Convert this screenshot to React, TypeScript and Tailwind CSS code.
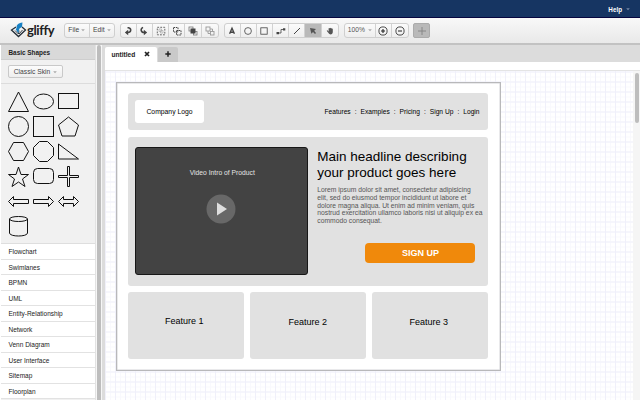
import React from "react";

const font = "font-['Liberation_Sans',Arial,sans-serif]";

const categories = [
  "Flowchart",
  "Swimlanes",
  "BPMN",
  "UML",
  "Entity-Relationship",
  "Network",
  "Venn Diagram",
  "User Interface",
  "Sitemap",
  "Floorplan",
];

const shapes: React.ReactNode[] = [
  <path d="M10.5 1L20.5 20.5H.5Z" />,
  <ellipse cx="10.5" cy="10.5" rx="10" ry="7.5" />,
  <rect x=".5" y="2.5" width="20" height="15" />,
  <circle cx="10.5" cy="10.5" r="10" />,
  <rect x=".5" y=".5" width="20" height="20" />,
  <path d="M10.5 1L20.5 9L17 20H4L.5 9Z" />,
  <path d="M5.5 1.5H15.5L20.5 10.5L15.5 19.5H5.5L.5 10.5Z" />,
  <path d="M6.5 .5H14.5L20.5 6.5V14.5L14.5 20.5H6.5L.5 14.5V6.5Z" />,
  <path d="M.5 3V18H20.5Z" />,
  <path d="M10.5 1L13 8.5H20.5L14.5 13L17 20.5L10.5 16L4 20.5L6.5 13L.5 8.5H8Z" />,
  <rect x=".5" y="2.5" width="20" height="15" rx="4" />,
  <path d="M9.5 .5H11.5V9.5H20.5V11.5H11.5V20.5H9.5V11.5H.5V9.5H9.5Z" />,
  <path d="M.5 10.5L5.5 5.5V8.5H20.5V12.5H5.5V15.5Z" />,
  <path d="M20.5 10.5L15.5 5.5V8.5H.5V12.5H15.5V15.5Z" />,
  <path d="M.5 10.5L5.5 5.5V8.5H15.5V5.5L20.5 10.5L15.5 15.5V12.5H5.5V15.5Z" />,
  <g>
    <path d="M1.5 3V17C1.5 21 19.5 21 19.5 17V3" />
    <ellipse cx="10.5" cy="3" rx="9" ry="2.5" />
  </g>,
];

function Caret({ light = false }: { light?: boolean }) {
  return (
    <svg width="4" height="3" viewBox="0 0 4 3" className="shrink-0">
      <path d="M.2 .3H3.8L2 2.3Z" fill={light ? "#7486a5" : "#aaa"} />
    </svg>
  );
}

function Icon({ children }: { children: React.ReactNode }) {
  return (
    <svg width="12" height="12" viewBox="0 0 12 12" fill="none" stroke="#444" className="shrink-0">
      {children}
    </svg>
  );
}

function Group({ children }: { children: React.ReactNode }) {
  return (
    <div className="flex h-[14.5px] shrink-0 divide-x divide-[#d2d2d2] overflow-hidden rounded-[3px] border border-[#cfcfcf] bg-gradient-to-b from-[#fbfbfb] to-[#eeeeee]">
      {children}
    </div>
  );
}

function Tool({ children, active = false }: { children: React.ReactNode; active?: boolean }) {
  return (
    <div className={`flex h-full w-[16.2px] shrink-0 items-center justify-center ${active ? "bg-[#b9b9b9]" : ""}`}>
      <Icon>{children}</Icon>
    </div>
  );
}

function Toolbar() {
  return (
    <div className="flex h-[27px] shrink-0 items-center border-b-2 border-[#c2c2c2] bg-gradient-to-b from-[#f8f8f8] to-[#e9e9e9] pl-[10px] text-[6.7px]">
      <div className="flex h-[25px] w-[54px] shrink-0 items-center">
        <svg width="17" height="17" viewBox="0 0 17 17" fill="none" className="shrink-0">
          <path d="M6 5L1.5 8L8.5 14.5L15.5 8L12 5" stroke="#222c36" strokeWidth="1.3" />
          <path d="M5 8.5L8.5 12L9 8.5M9 12L12.5 8" stroke="#222c36" strokeWidth=".9" />
          <path d="M12.5 .5C8 1 6 3.5 6.8 5.5L5.8 7.5L8.3 11.3L9.3 6.7L12 4.8Z" fill="#1881c4" />
        </svg>
        <span className="-mt-[1px] font-['Lato',sans-serif] text-[13px] leading-[16px] font-bold tracking-[-0.4px] text-[#202020]">gliffy</span>
      </div>
      <Group>
        <div className="flex w-[24.5px] items-center justify-center gap-[2px]">File<Caret /></div>
        <div className="flex w-[24.5px] items-center justify-center gap-[2px]">Edit<Caret /></div>
      </Group>
      <div className="w-[4.7px] shrink-0" />
      <Group>
        <Tool><path d="M5.5 2.8H6.5C9.8 3.5 9.3 7.5 5.8 7.5" strokeWidth="1.5" /><path d="M2.8 7.5L6.2 4.8V10.2Z" fill="#444" stroke="none" /></Tool>
        <Tool><path d="M5 2.3C2 4 2.8 7.5 6.2 7.5" strokeWidth="1.5" /><path d="M9.2 7.5L5.8 4.8V10.2Z" fill="#444" stroke="none" /></Tool>
        <Tool>
          <rect x="2.3" y="2.3" width="7.5" height="7.5" strokeDasharray="1.8 1.2" strokeWidth=".8" />
          <path d="M4 4H6.5V6.5H4ZM5.5 5.5H8V8H5.5Z" stroke="#aaa" strokeWidth=".7" />
        </Tool>
        <Tool>
          <rect x="2.5" y="2.5" width="4.5" height="4.5" strokeDasharray="1.5 .8" />
          <rect x="5.5" y="5.5" width="4.5" height="4.5" strokeDasharray="1.5 .8" />
        </Tool>
        <Tool>
          <rect x="2" y="2" width="4" height="4" stroke="#777" strokeWidth=".8" />
          <rect x="6.5" y="6.5" width="3.5" height="3.5" stroke="#777" strokeWidth=".8" />
          <rect x="3.5" y="3.5" width="5" height="5" fill="#444" stroke="none" />
        </Tool>
        <Tool>
          <g stroke="#999" strokeWidth=".9"><rect x="2" y="2" width="4" height="4" /><rect x="6.5" y="6.5" width="3.5" height="3.5" /><path d="M4 6V8.5H6M6 4H8.5V6" /></g>
        </Tool>
      </Group>
      <div className="w-[4.7px] shrink-0" />
      <Group>
        <Tool><path d="M3.6 8.8L6 3.3L8.4 8.8M4.4 7.2H7.6" strokeWidth="1.4" /></Tool>
        <Tool><circle cx="6" cy="6" r="3.4" strokeWidth=".8" /></Tool>
        <Tool><rect x="2.8" y="2.8" width="6.4" height="6.4" strokeWidth=".8" /></Tool>
        <Tool><path d="M3 8H6V4.5H9" strokeWidth=".8" /><path d="M1.5 7H4V9.3H1.5ZM8 3.3H10.3V5.5H8Z" fill="#444" stroke="none" /></Tool>
        <Tool><path d="M3 9L9 3" strokeWidth="1" /></Tool>
        <Tool active><path d="M3 3L9 4L7.2 5.7L9 8L8 9L6 7L4.4 8.7Z" fill="#555" stroke="none" /></Tool>
        <Tool><path d="M3.4 5.2L4.6 6.5V3.5C4.6 2.8 5.4 2.8 5.5 3.5C5.5 2.5 6.5 2.5 6.6 3.3C7 2.7 7.7 3 7.7 3.7C8.3 3.3 8.8 3.7 8.8 4.3V7C8.8 10 5.3 10 4.5 8L2.8 6C2.7 5.4 3 5 3.4 5.2Z" fill="#555" stroke="none" /></Tool>
      </Group>
      <div className="w-[5px] shrink-0" />
      <Group>
        <div className="flex w-[31px] items-center justify-center gap-[3px] text-[#555]">100%<Caret /></div>
        <Tool><circle cx="6" cy="6" r="4.1" stroke="#222" strokeWidth=".8" /><path d="M4 6H8M6 4V8" stroke="#222" strokeWidth="1.1" /></Tool>
        <Tool><circle cx="6" cy="6" r="4.1" stroke="#222" strokeWidth=".8" /><path d="M4 6H8" stroke="#222" strokeWidth="1.1" /></Tool>
      </Group>
      <div className="w-[4.3px] shrink-0" />
      <div className="flex h-[14.5px] w-[17px] items-center justify-center rounded-[2px] border border-[#ababab] bg-[#b9b9b9]">
        <Icon><path d="M2 6H10M6 2V10" stroke="#858585" strokeWidth=".9" /></Icon>
      </div>
    </div>
  );
}

function Sidebar() {
  return (
    <aside className="flex w-[105px] shrink-0 bg-[#dcdcdc]">
      <div className="flex w-[96px] shrink-0 flex-col overflow-hidden border-r border-l border-r-[#e2e2e2] border-l-white bg-[#f1f1f1]">
        <div className="flex h-[15px] shrink-0 items-center border-b border-[#cecece] bg-[#d9d9d9] pt-[1px] pl-[7.5px] text-[6.4px] font-bold text-[#222]">
          Basic Shapes
        </div>
        <div className="flex h-[24px] shrink-0 items-center border-b border-[#dcdcdc] pl-[7px]">
          <div className="flex h-[12.5px] w-[55px] items-center justify-center gap-[3px] rounded-[2px] border border-[#c9c9c9] bg-gradient-to-b from-[#fcfcfc] to-[#eeeeee] pt-[1px] text-[6.7px] text-[#444]">
            Classic Skin<Caret />
          </div>
        </div>
        <div className="grid h-[159px] shrink-0 grid-cols-[21px_21px_21px] content-start gap-x-[4px] gap-y-[4px] pt-[6.5px] pl-[7px]">
          {shapes.map((shape, i) => (
            <svg key={i} width="21" height="21" viewBox="0 0 21 21" fill="none" stroke="#111">
              {shape}
            </svg>
          ))}
        </div>
        <ul className="shrink-0 border-t border-[#dedede] bg-white">
          {categories.map((c) => (
            <li key={c} className="flex h-[15.5px] items-center border-b border-[#e2e2e2] pt-[1.5px] pl-[7.5px] text-[6.5px] whitespace-nowrap text-[#222]">
              {c}
            </li>
          ))}
        </ul>
      </div>
      <div className="flex w-[6px] shrink-0 bg-[#f6f6f6] pr-[1px] pl-[1px]">
        <div className="w-[4px] rounded-t-[2px] bg-[#bdbdbd]" />
      </div>
    </aside>
  );
}

function Mockup() {
  return (
    <div className="flex h-[289px] w-[385px] flex-col gap-[6.5px] border border-[#b8b8ba] bg-white pt-[10.5px] pl-[11.5px] shadow-[inset_0_0_0_0.5px_#d4d4d8]">
      <header className="flex h-[37px] w-[359.5px] shrink-0 items-center justify-between rounded-[3px] bg-[#e1e1e1] pr-[8px] pl-[6.5px]">
        <div className="flex h-[23.5px] w-[69px] items-center justify-center rounded-[3px] bg-white pt-[1.5px] pl-[1px] text-[6.8px] text-black">Company Logo</div>
        <nav className="flex gap-[4px] pt-[1px] text-[6.65px] text-black">
          <span>Features</span><span>:</span><span>Examples</span><span>:</span><span>Pricing</span><span>:</span><span>Sign Up</span><span>:</span><span>Login</span>
        </nav>
      </header>
      <section className="flex h-[149px] w-[359.5px] shrink-0 rounded-[3px] bg-[#e1e1e1] pt-[10px] pl-[6.8px]">
        <div className="flex h-[128.5px] w-[173px] shrink-0 flex-col items-center rounded-[3px] border border-[#171717] bg-[#434343] pt-[20.5px]">
          <span className="pl-[2px] text-[6.75px] leading-[10px] text-[#e4e4e4]">Video Intro of Product</span>
          <svg width="30" height="30" viewBox="0 0 30 30" className="mt-[15.5px]">
            <circle cx="15" cy="15" r="14.5" fill="#686868" />
            <path d="M11 8.5L21 15L11 21.5Z" fill="#dedede" />
          </svg>
        </div>
        <div className="flex w-[172px] flex-col pl-[9.5px]">
          <h1 className="mt-[2.5px] text-[13.5px] leading-[15.6px] whitespace-nowrap text-black">Main headline describing<br />your product goes here</h1>
          <p className="mt-[6px] text-[6.75px] leading-[7.7px] whitespace-nowrap text-[#555]">
            Lorem ipsum dolor sit amet, consectetur adipisicing<br />
            elit, sed do eiusmod tempor incididunt ut labore et<br />
            dolore magna aliqua. Ut enim ad minim veniam, quis<br />
            nostrud exercitation ullamco laboris nisi ut aliquip ex ea<br />
            commodo consequat.
          </p>
          <button className="mt-[18.5px] ml-[48px] flex h-[19.5px] w-[109.5px] shrink-0 items-center justify-center rounded-[4px] bg-[#f0890b] pt-[1.5px] pl-[1px] text-[9px] font-bold text-white">SIGN UP</button>
        </div>
      </section>
      <div className="flex gap-[6.5px] text-[9px] leading-[10px] text-black">
        <div className="h-[67px] w-[115.5px] rounded-[3px] bg-[#e1e1e1] pt-[24px] pr-[3px] text-center">Feature 1</div>
        <div className="h-[67px] w-[115.5px] rounded-[3px] bg-[#e1e1e1] pt-[25px] text-center">Feature 2</div>
        <div className="h-[67px] w-[115.5px] rounded-[3px] bg-[#e1e1e1] pt-[25px] pr-[2px] text-center">Feature 3</div>
      </div>
    </div>
  );
}

export default function App() {
  return (
    <div className={`flex h-[400px] w-[640px] flex-col overflow-hidden bg-white text-[7px] text-[#444] ${font}`}>
      <div className="flex h-[18px] shrink-0 items-center justify-end gap-[4px] border-b border-[#06063f] bg-[#163562] pt-[2px] pr-[10px] text-[6.3px] font-bold text-white">
        Help<Caret light />
      </div>
      <Toolbar />
      <div className="flex min-h-0 flex-1">
        <Sidebar />
        <main className="flex min-w-0 flex-1 flex-col">
          <div className="flex h-[17px] shrink-0 items-end bg-[#dcdcdc]">
            <div className="flex h-[15.5px] w-[52px] items-center justify-between rounded-t-[2px] bg-white pr-[7.5px] pl-[6.5px] text-[6.6px] font-bold text-[#222]">
              <span className="pt-[1px]">untitled</span>
              <svg width="6" height="6" viewBox="0 0 6 6" stroke="#222" strokeWidth="1.7"><path d="M1 1L5 5M5 1L1 5" /></svg>
            </div>
            <div className="ml-[1px] flex h-[15.5px] w-[20px] items-center justify-center rounded-t-[2px] bg-[#c9c9c9]">
              <svg width="6" height="6" viewBox="0 0 6 6" stroke="#222" strokeWidth="1.5"><path d="M3 .3V5.7M.3 3H5.7" /></svg>
            </div>
          </div>
          <div className="h-[8.5px] shrink-0 border-b border-[#e4e4e4] bg-white" />
          <div className="flex min-h-0 flex-1 justify-between">
            <div className="w-[528px] overflow-hidden bg-[linear-gradient(to_right,#f0f0fa_1px,transparent_1px),linear-gradient(to_bottom,#f0f0fa_1px,transparent_1px),linear-gradient(to_right,#f9f9fd_1px,transparent_1px),linear-gradient(to_bottom,#f9f9fd_1px,transparent_1px)] bg-[size:10px_10px,10px_10px,5px_5px,5px_5px] bg-[position:0_0.5px] pt-[11px] pl-[10.5px]">
              <Mockup />
            </div>
            <div className="w-[7px] bg-[#f5f5f5] pt-[2px] pl-[1.5px]">
              <div className="h-[50px] w-[4px] rounded-full bg-[#bdbdbd]" />
            </div>
          </div>
        </main>
      </div>
    </div>
  );
}
